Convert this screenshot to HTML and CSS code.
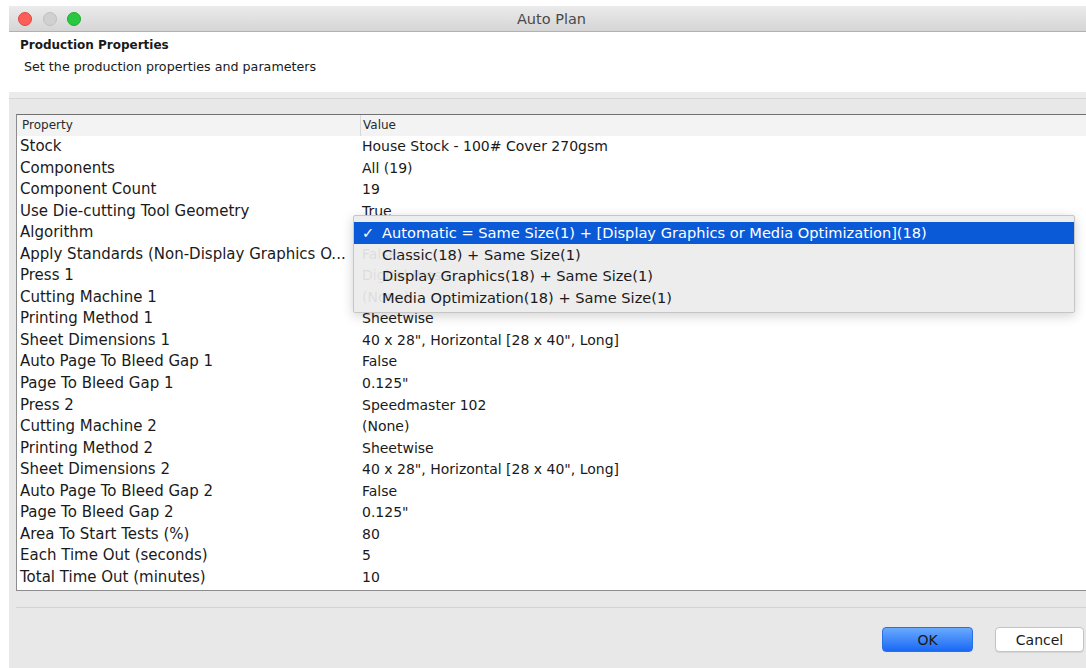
FILE: index.html
```html
<!DOCTYPE html>
<html lang="en">
<head>
<meta charset="utf-8">
<title>Auto Plan</title>
<link rel="stylesheet" href="styles.css">
</head>
<body>
<div class="window">
  <div class="titlebar">
    <div class="lights">
      <span class="light red"></span>
      <span class="light grey"></span>
      <span class="light green"></span>
    </div>
    <div class="title">Auto Plan</div>
  </div>

  <div class="header">
    <div class="h-title">Production Properties</div>
    <div class="h-sub">Set the production properties and parameters</div>
  </div>
  <div class="header-edge"></div>

  <div class="content">
    <div class="table">
      <div class="thead">
        <div class="cell prop">Property</div>
        <div class="cell val">Value</div>
      </div>
      <div class="row"><div class="cell prop">Stock</div><div class="cell val">House Stock - 100# Cover 270gsm</div></div>
      <div class="row"><div class="cell prop">Components</div><div class="cell val">All (19)</div></div>
      <div class="row"><div class="cell prop">Component Count</div><div class="cell val">19</div></div>
      <div class="row"><div class="cell prop">Use Die-cutting Tool Geometry</div><div class="cell val">True</div></div>
      <div class="row"><div class="cell prop">Algorithm</div>
        <div class="cell val anchor">Automatic
          <div class="menu">
            <div class="item selected"><span class="check">✓</span>Automatic = Same Size(1) + [Display Graphics or Media Optimization](18)</div>
            <div class="item"><span class="check"></span>Classic(18) + Same Size(1)</div>
            <div class="item"><span class="check"></span>Display Graphics(18) + Same Size(1)</div>
            <div class="item"><span class="check"></span>Media Optimization(18) + Same Size(1)</div>
          </div>
        </div>
      </div>
      <div class="row"><div class="cell prop">Apply Standards (Non-Display Graphics O...</div><div class="cell val">False</div></div>
      <div class="row"><div class="cell prop">Press 1</div><div class="cell val">Digital Press</div></div>
      <div class="row"><div class="cell prop">Cutting Machine 1</div><div class="cell val">(None)</div></div>
      <div class="row"><div class="cell prop">Printing Method 1</div><div class="cell val">Sheetwise</div></div>
      <div class="row"><div class="cell prop">Sheet Dimensions 1</div><div class="cell val">40 x 28", Horizontal [28 x 40", Long]</div></div>
      <div class="row"><div class="cell prop">Auto Page To Bleed Gap 1</div><div class="cell val">False</div></div>
      <div class="row"><div class="cell prop">Page To Bleed Gap 1</div><div class="cell val">0.125"</div></div>
      <div class="row"><div class="cell prop">Press 2</div><div class="cell val">Speedmaster 102</div></div>
      <div class="row"><div class="cell prop">Cutting Machine 2</div><div class="cell val">(None)</div></div>
      <div class="row"><div class="cell prop">Printing Method 2</div><div class="cell val">Sheetwise</div></div>
      <div class="row"><div class="cell prop">Sheet Dimensions 2</div><div class="cell val">40 x 28", Horizontal [28 x 40", Long]</div></div>
      <div class="row"><div class="cell prop">Auto Page To Bleed Gap 2</div><div class="cell val">False</div></div>
      <div class="row"><div class="cell prop">Page To Bleed Gap 2</div><div class="cell val">0.125"</div></div>
      <div class="row"><div class="cell prop">Area To Start Tests (%)</div><div class="cell val">80</div></div>
      <div class="row"><div class="cell prop">Each Time Out (seconds)</div><div class="cell val">5</div></div>
      <div class="row"><div class="cell prop">Total Time Out (minutes)</div><div class="cell val">10</div></div>
    </div>

    <div class="footer">
      <button class="btn ok">OK</button>
      <button class="btn cancel">Cancel</button>
    </div>
  </div>
</div>
</body>
</html>
```

FILE: styles.css
```css
html, body {
  margin: 0;
  padding: 0;
  background: #ffffff;
  overflow: hidden;
  height: 100%;
}

body {
  font-family: "DejaVu Sans", "Liberation Sans", sans-serif;
  color: #1a1a1a;
}

.window {
  margin: 6px 0 0 9px;
  width: 1090px;
  height: 680px;
  background: #e8e8e8;
  display: flex;
  flex-direction: column;
}

/* title bar */
.titlebar {
  height: 25px;
  border-bottom: 1px solid #b1b1b1;
  background: linear-gradient(#ebebeb, #d5d5d5);
  display: flex;
  align-items: center;
}

.lights {
  display: flex;
  gap: 10.5px;
  padding-left: 9px;
}

.light {
  width: 14px;
  height: 14px;
  border-radius: 50%;
  box-sizing: border-box;
}

.light.red { background: #fc5f57; border: 1px solid #e2463f; }
.light.grey { background: #d0d0d0; border: 1px solid #c0c0c0; }
.light.green { background: #29c840; border: 1px solid #1eac2f; }

.title {
  flex: 1;
  text-align: center;
  font-size: 14.5px;
  color: #4a4a4a;
  margin-left: -77px;
  padding-top: 1px;
}

/* heading panel */
.header {
  height: 60px;
  background: #ffffff;
  padding-left: 11px;
  box-sizing: border-box;
  padding-top: 5px;
}

.h-title {
  font-size: 12px;
  font-weight: bold;
  line-height: 16px;
}

.h-sub {
  font-size: 12.7px;
  line-height: 16px;
  margin-top: 6px;
  padding-left: 4px;
}

.header-edge {
  height: 6px;
  background: #ebebeb;
  border-bottom: 1px solid #d6d6d6;
}

/* property sheet */
.content {
  flex: 1;
  padding: 15px 0 0 7px;
}

.table {
  border: 1px solid #8c8c8c;
  border-top-color: #707070;
  background: #ffffff;
  margin-right: -10px;
  padding-bottom: 2px;
}

.thead {
  display: flex;
  height: 21px;
  background: #f3f3f3;
  font-size: 12px;
  line-height: 21px;
  color: #2a2a2a;
}

.thead .val {
  border-left: 1px solid #d8d8d8;
  padding-left: 1px;
}

.row {
  display: flex;
  height: 21.55px;
  line-height: 21.55px;
}

.cell.prop {
  width: 343px;
  box-sizing: border-box;
  padding-left: 3px;
  white-space: nowrap;
  overflow: hidden;
  font-size: 15px;
}

.thead .cell.prop {
  font-size: 12px;
  padding-left: 5px;
}

.cell.val {
  flex: 1;
  padding-left: 2px;
  white-space: nowrap;
  font-size: 14px;
}

.thead .cell.val {
  font-size: 12px;
}

.anchor {
  position: relative;
}

/* popup list for the Algorithm value */
.menu {
  position: absolute;
  left: -7px;
  top: -7px;
  width: 722px;
  box-sizing: border-box;
  padding: 6px 0 4px;
  background: rgba(236, 236, 236, 0.93);
  border: 1px solid #c6c6c6;
  border-radius: 2px;
  box-shadow: 0 3px 12px rgba(0, 0, 0, 0.18);
}

.item {
  height: 21.5px;
  line-height: 21.5px;
  font-size: 14.6px;
  color: #1a1a1a;
  display: flex;
  align-items: center;
}

.item.selected {
  background: #0a5ad8;
  color: #ffffff;
}

.check {
  width: 20px;
  padding-left: 8px;
  flex: none;
}

/* buttons */
.footer {
  margin-top: 16px;
  border-top: 1px solid #d2d2d2;
  display: flex;
  justify-content: flex-end;
  gap: 22px;
  padding: 19px 15px 0 0;
}

.btn {
  font-family: "DejaVu Sans", "Liberation Sans", sans-serif;
  font-size: 14px;
  height: 25px;
  border-radius: 4px;
  padding: 0;
  color: #1a1a1a;
}

.btn.ok {
  width: 91px;
  border: 1px solid #2a6fe6;
  background: linear-gradient(#69a9fd, #1a69f6);
}

.btn.cancel {
  width: 89px;
  border: 1px solid #c3c3c3;
  background: #ffffff;
  box-shadow: 0 1px 1px rgba(0, 0, 0, 0.08);
}
```
